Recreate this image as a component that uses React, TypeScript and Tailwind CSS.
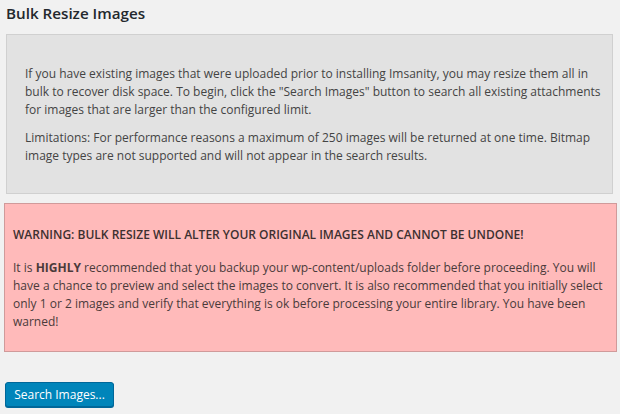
import React from 'react';

const App: React.FC = () => {
    return (
        <div className="min-h-[414px] w-[620px] bg-[#f1f1f1] font-['Open_Sans',sans-serif] text-[12px] leading-[18px] text-[#444]">
            <h2 className="pl-[6px] pt-[2px] text-[15.2px] leading-[22px] font-semibold text-[#23282d]">
                Bulk Resize Images
            </h2>

            <div className="mt-[10px] ml-[6px] w-[607px] border border-[#d0d0d0] bg-[#e2e2e2] pl-[18px] pr-[10px] pt-[30px] pb-[28px] whitespace-nowrap">
                <p>
                    If you have existing images that were uploaded prior to installing Imsanity, you may resize them all in
                    <br />
                    bulk to recover disk space. To begin, click the "Search Images" button to search all existing attachments
                    <br />
                    for images that are larger than the configured limit.
                </p>
                <p className="mt-[10px]">
                    Limitations: For performance reasons a maximum of 250 images will be returned at one time. Bitmap
                    <br />
                    image types are not supported and will not appear in the search results.
                </p>
            </div>

            <div className="mt-[9px] ml-[4px] w-[613px] border border-[#d09a9a] bg-[#ffbaba] pl-[8px] pr-[4px] pt-[22px] pb-[20px] whitespace-nowrap text-[#4a3a3a]">
                <p className="font-semibold text-[#3d3030]">
                    WARNING: BULK RESIZE WILL ALTER YOUR ORIGINAL IMAGES AND CANNOT BE UNDONE!
                </p>
                <p className="mt-[15px]">
                    It is <b className="font-bold">HIGHLY</b> recommended that you backup your wp-content/uploads folder before proceeding. You will
                    <br />
                    have a chance to preview and select the images to convert. It is also recommended that you initially select
                    <br />
                    only 1 or 2 images and verify that everything is ok before processing your entire library. You have been
                    <br />
                    warned!
                </p>
            </div>

            <div className="mt-[30px] ml-[5px]">
                <button className="h-[25px] w-[109px] rounded-[3px] border border-[#006799] bg-[#0085ba] text-[12px] leading-[23px] text-white shadow-[0_1px_0_#006799]">
                    Search Images...
                </button>
            </div>
        </div>
    );
};

export default App;
